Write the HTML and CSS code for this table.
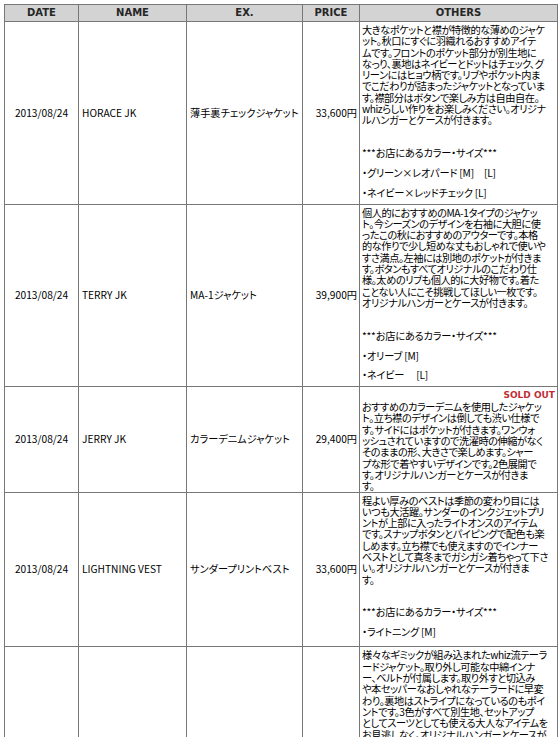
FILE: index.html
```html
<!DOCTYPE html>
<html lang="ja">
<head>
<meta charset="utf-8">
<title>Items</title>
<link rel="stylesheet" href="styles.css">
</head>
<body>
<table class="items">
  <colgroup>
    <col class="c-date"><col class="c-name"><col class="c-ex"><col class="c-price"><col class="c-others">
  </colgroup>
  <thead>
    <tr><th>DATE</th><th>NAME</th><th>EX.</th><th>PRICE</th><th>OTHERS</th></tr>
  </thead>
  <tbody>
    <tr>
      <td class="date">2013/08/24</td>
      <td class="name">HORACE JK</td>
      <td class="ex">薄手裏チェックジャケット</td>
      <td class="price">33,600円</td>
      <td class="others">
        <div class="desc">大きなポケットと襟が特徴的な薄めのジャケ<br>ット。秋口にすぐに羽織れるおすすめアイテ<br>ムです。フロントのポケット部分が別生地に<br>なっり、裏地はネイビーとドットはチェック、グ<br>リーンにはヒョウ柄です。リブやポケット内ま<br>でこだわりが詰まったジャケットとなっていま<br>す。襟部分はボタンで楽しみ方は自由自在。<br>whizらしい作りをお楽しみください。オリジナ<br>ルハンガーとケースが付きます。</div>
        <div class="stock">
          <div class="stock-title">***お店にあるカラー・サイズ***</div>
          <div class="stock-item">・グリーン×レオパード [M]　[L]</div>
          <div class="stock-item">・ネイビー×レッドチェック [L]</div>
        </div>
      </td>
    </tr>
    <tr>
      <td class="date">2013/08/24</td>
      <td class="name">TERRY JK</td>
      <td class="ex">MA-1ジャケット</td>
      <td class="price">39,900円</td>
      <td class="others">
        <div class="desc">個人的におすすめのMA-1タイプのジャケッ<br>ト。今シーズンのデザインを右袖に大胆に使<br>ったこの秋におすすめのアウターです。本格<br>的な作りで少し短めな丈もおしゃれで使いや<br>すさ満点。左袖には別地のポケットが付きま<br>す。ボタンもすべてオリジナルのこだわり仕<br>様。太めのリブも個人的に大好物です。着た<br>ことない人にこそ挑戦してほしい一枚です。<br>オリジナルハンガーとケースが付きます。</div>
        <div class="stock">
          <div class="stock-title">***お店にあるカラー・サイズ***</div>
          <div class="stock-item">・オリーブ [M]</div>
          <div class="stock-item">・ネイビー　 [L]</div>
        </div>
      </td>
    </tr>
    <tr>
      <td class="date">2013/08/24</td>
      <td class="name">JERRY JK</td>
      <td class="ex">カラーデニムジャケット</td>
      <td class="price">29,400円</td>
      <td class="others">
        <div class="sold">SOLD OUT</div>
        <div class="desc">おすすめのカラーデニムを使用したジャケッ<br>ト。立ち襟のデザインは倒しても渋い仕様で<br>す。サイドにはポケットが付きます。ワンウォ<br>ッシュされていますので洗濯時の伸縮がなく<br>そのままの形、大きさで楽しめます。シャー<br>プな形で着やすいデザインです。2色展開で<br>す。オリジナルハンガーとケースが付きま<br>す。</div>
      </td>
    </tr>
    <tr>
      <td class="date">2013/08/24</td>
      <td class="name">LIGHTNING VEST</td>
      <td class="ex">サンダープリントベスト</td>
      <td class="price">33,600円</td>
      <td class="others">
        <div class="desc">程よい厚みのベストは季節の変わり目には<br>いつも大活躍。サンダーのインクジェットプリ<br>ントが上部に入ったライトオンスのアイテム<br>です。スナップボタンとパイピングで配色も楽<br>しめます。立ち襟でも使えますのでインナー<br>ベストとして真冬までガシガシ着ちゃって下さ<br>い。オリジナルハンガーとケースが付きま<br>す。</div>
        <div class="stock stock-tall">
          <div class="stock-title">***お店にあるカラー・サイズ***</div>
          <div class="stock-item">・ライトニング [M]</div>
        </div>
      </td>
    </tr>
    <tr>
      <td class="date"></td>
      <td class="name"></td>
      <td class="ex"></td>
      <td class="price"></td>
      <td class="others">
        <div class="desc">様々なギミックが組み込まれたwhiz流テーラ<br>ードジャケット。取り外し可能な中綿インナ<br>ー、ベルトが付属します。取り外すと切込み<br>や本セッパーなおしゃれなテーラードに早変<br>わり。裏地はストライプになっているのもポイ<br>ントです。3色がすべて別生地、セットアップ<br>としてスーツとしても使える大人なアイテムを<br>お見逃しなく。オリジナルハンガーとケースが<br>付きます。</div>
      </td>
    </tr>
  </tbody>
</table>
</body>
</html>
```

FILE: styles.css
```css
html, body {
  margin: 0;
  background: #ffffff;
}

body {
  padding: 4px 3px 0 4px;
  font-family: "Noto Sans CJK JP", "Noto Sans", sans-serif;
  font-size: 10.2px;
  color: #000000;
  font-feature-settings: "palt";
}

.items {
  border-collapse: collapse;
  table-layout: fixed;
  width: 553px;
}

.c-date { width: 74px; }
.c-name { width: 108px; }
.c-ex { width: 116px; }
.c-price { width: 57px; }
.c-others { width: 198px; }

.items th,
.items td {
  border: 1px solid #777777;
}

.items th {
  height: 16px;
  padding: 0;
  background: #d3d3d3;
  color: #262626;
  font-family: "DejaVu Sans", Verdana, sans-serif;
  font-weight: bold;
  font-size: 10px;
  text-align: center;
  vertical-align: middle;
  line-height: 16px;
}

.items td {
  vertical-align: middle;
  padding: 0 2px;
  line-height: 12px;
}

.date {
  text-align: center;
}

.items td.name,
.items td.ex {
  text-align: left;
  padding-left: 3px;
}

.price {
  text-align: right;
}

.items td.others {
  vertical-align: top;
  padding: 2px 1px 0 2px;
}

.desc {
  line-height: 11.3px;
  letter-spacing: -0.45px;
  white-space: nowrap;
}

.stock {
  margin-top: 21.5px;
  padding-bottom: 5.5px;
  line-height: 11.3px;
  letter-spacing: -0.2px;
  white-space: nowrap;
}

.stock-tall {
  padding-bottom: 9px;
}

.stock-item {
  margin-top: 8.5px;
}

.sold {
  height: 12px;
  line-height: 12px;
  padding-right: 1px;
  text-align: right;
  font-family: "DejaVu Sans", Verdana, sans-serif;
  font-weight: bold;
  font-size: 9px;
  color: #bf2f35;
}
```
